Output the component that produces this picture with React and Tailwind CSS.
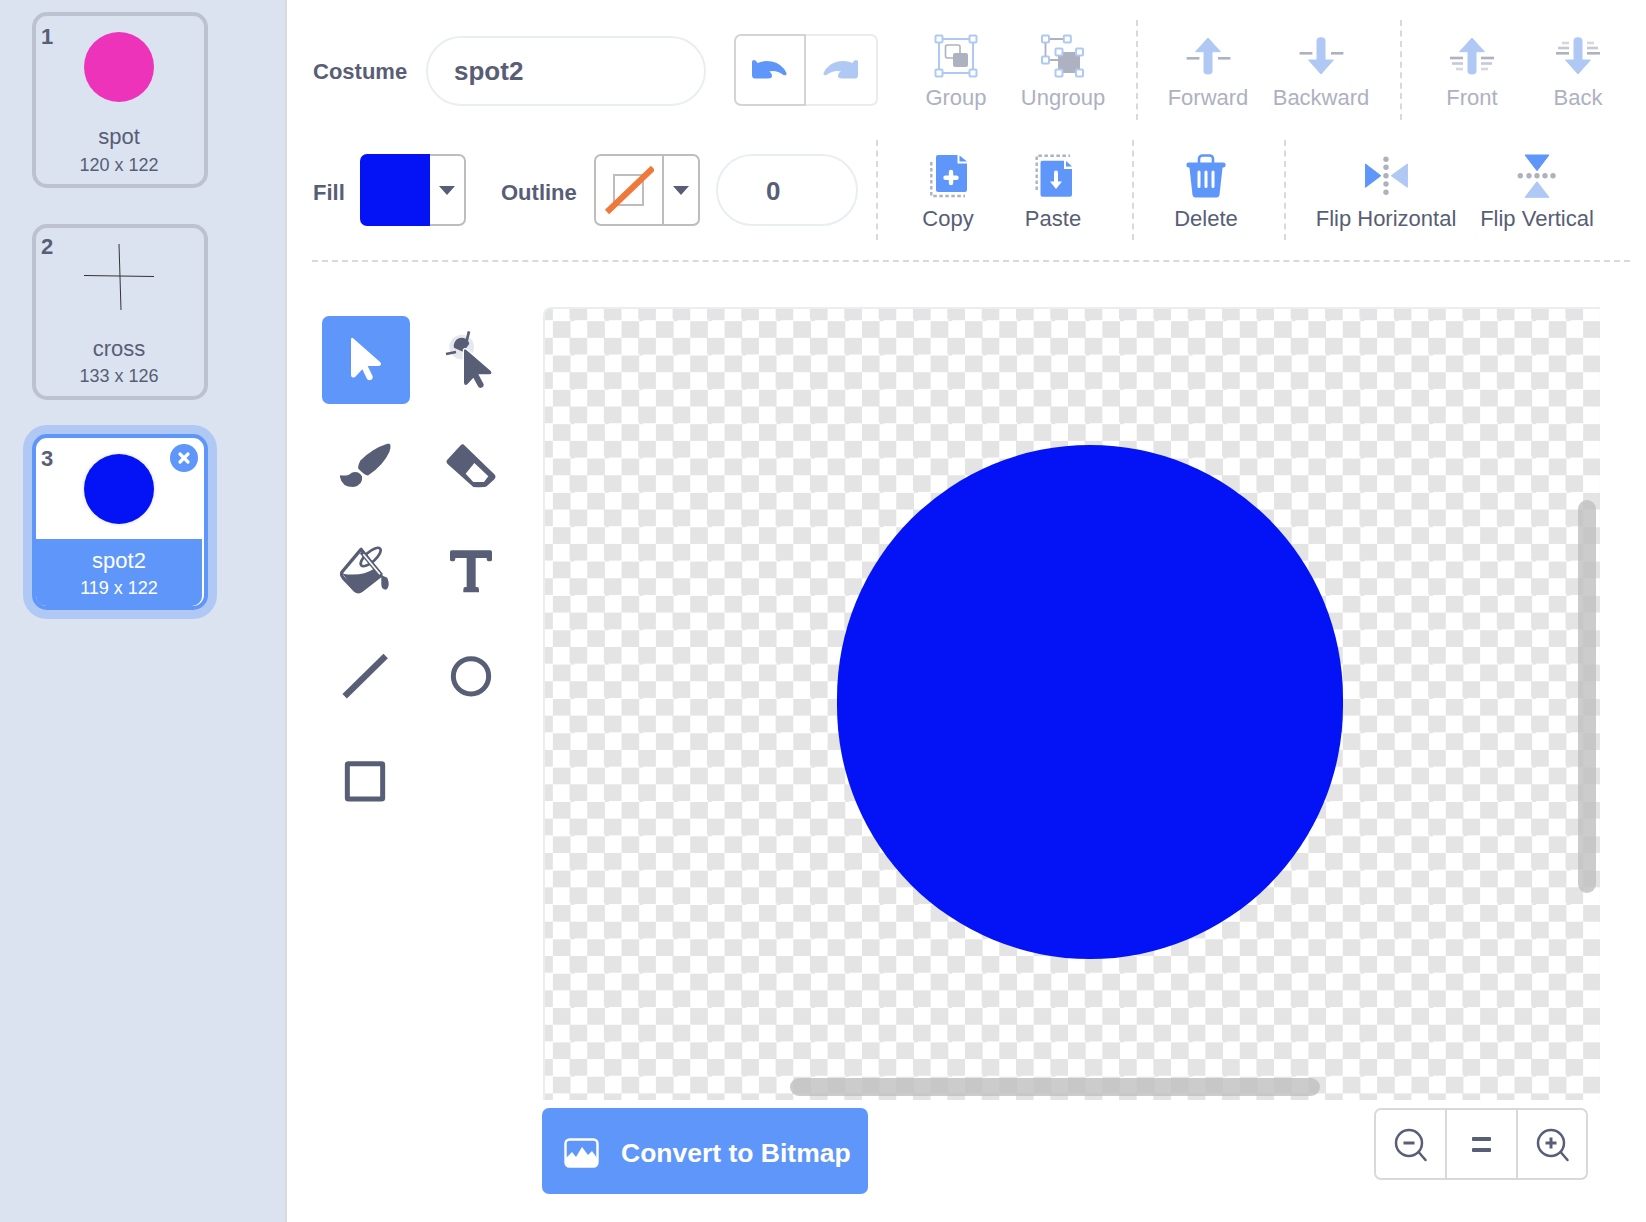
const gray = "#575e75";
const muted = "#aeb1bf";
const blue = "#5f96fa";
const pale = "#b0c8f4";

function CostumeCard({ num, name, size, selected, numClass, sizeClass, children }) {
    return (
        <div
            className={`relative w-[176px] h-[176px] rounded-[15px] border-4 flex flex-col items-center pr-[2px] ${
                selected
                    ? "border-[#5f96fa] bg-white shadow-[0_0_0_9px_#b0c8f4]"
                    : "border-[#bcc2cf]"
            }`}
        >
            <span className={`absolute left-[5px] text-[22px] leading-[26px] font-bold text-[#575e75] ${numClass}`}>
                {num}
            </span>
            <div className="mt-[16px] w-[70px] h-[70px]">{children}</div>
            {selected ? (
                <div className="self-start mt-[15px] w-[166px] h-[75px] bg-[#5f96fa] rounded-b-[10px] flex flex-col items-center text-white">
                    <span className="mt-[9px] text-[22px] leading-[26px]">{name}</span>
                    <span className="mt-[3px] text-[18px] leading-[22px]">{size}</span>
                </div>
            ) : (
                <>
                    <span className="mt-[22px] text-[22px] leading-[26px] text-[#575e75]">{name}</span>
                    <span className={`text-[18px] leading-[22px] text-[#575e75] ${sizeClass}`}>{size}</span>
                </>
            )}
            {selected && (
                <div className="absolute right-[6px] top-[6px] w-[28px] h-[28px] rounded-full bg-[#5f96fa] flex items-center justify-center">
                    <svg width="14" height="14" viewBox="0 0 14 14">
                        <path d="M3 3L11 11M11 3L3 11" stroke="#fff" strokeWidth="3.2" strokeLinecap="round" />
                    </svg>
                </div>
            )}
        </div>
    );
}

function ToolBtn({ label, disabled, className, children, top }) {
    return (
        <div className={`flex flex-col items-center shrink-0 ${top ? "pt-[10px]" : "pt-[11px]"} ${className}`}>
            <svg width="60" height="50" viewBox="0 0 60 50">
                {children}
            </svg>
            <span
                className={`mt-[5px] text-[22px] leading-[26px] whitespace-nowrap ${
                    disabled ? "text-[#aeb1bf]" : "text-[#575e75]"
                }`}
            >
                {label}
            </span>
        </div>
    );
}

function Sep({ className }) {
    return <div className={`h-[100px] shrink-0 border-l-2 border-dashed border-[#d9d9d9] ${className}`}></div>;
}

function ArrowUp({ dashes }) {
    return (
        <>
            <path d="M30 8L42.4 21.7H34V42Q34 44 30 44Q26 44 26 42V21.7H17.6Z" fill={pale} strokeLinejoin="round" stroke={pale} strokeWidth="1" />
            {dashes}
        </>
    );
}

function ArrowDown({ dashes }) {
    return (
        <>
            <path d="M30 44L42.4 30H34V10Q34 7.7 30 7.7Q26 7.7 26 10V30H17.6Z" fill={pale} strokeLinejoin="round" stroke={pale} strokeWidth="1" />
            {dashes}
        </>
    );
}

function Dash({ x1, x2, y, o }) {
    return <line x1={x1} x2={x2} y1={y} y2={y} stroke={muted} strokeWidth="2.6" opacity={o || 1} />;
}

function Handle({ x, y }) {
    return <rect x={x - 3.5} y={y - 3.5} width="7" height="7" rx="1" fill="#fff" stroke={pale} strokeWidth="2" />;
}

function Caret() {
    return (
        <svg width="16" height="9" viewBox="0 0 16 9">
            <path d="M0 0H16L8 9Z" fill={gray} />
        </svg>
    );
}

function Undo({ color, flip }) {
    return (
        <svg width="36" height="20" viewBox="0 0 36 20" className={flip ? "-scale-x-100" : ""}>
            <path
                d="M0 2Q0 0 2 0Q4 0 5.5 3Q12 0 20 1.5Q30 3.5 34.5 13Q35 16 31.5 15Q24 9.5 17 11.5Q20 13 20 16Q20 18.5 16 18.5H3Q0 18.5 0 15Z"
                fill={color}
            />
        </svg>
    );
}

function ToolIcon({ active, box, children }) {
    return (
        <div className={`w-[88px] h-[88px] rounded-[7px] ${active ? "bg-[#5f96fa]" : ""}`}>
            <svg width="88" height="88" viewBox={box}>
                {children}
            </svg>
        </div>
    );
}

function ZoomGlass({ plus }) {
    return (
        <svg width="34" height="34" viewBox="0 0 34 34">
            <circle cx="15" cy="15" r="13" fill="none" stroke={gray} strokeWidth="2.5" />
            <line x1="25" y1="24.5" x2="31.5" y2="32" stroke={gray} strokeWidth="2.5" strokeLinecap="round" />
            <line x1="9.5" x2="20.5" y1="15" y2="15" stroke={gray} strokeWidth="3" />
            {plus && <line x1="15" x2="15" y1="9.5" y2="20.5" stroke={gray} strokeWidth="3" />}
        </svg>
    );
}

export default function App() {
    return (
        <div className="flex w-full h-[1222px] overflow-hidden bg-white font-['Liberation_Sans',Arial,sans-serif] text-[#575e75]">
            {/* liste des costumes */}
            <div className="w-[287px] shrink-0 bg-[#dbe3f0] border-r-2 border-[#d9d9d9] pl-[32px] pt-[12px]">
                <CostumeCard num="1" name="spot" size="120 x 122" numClass="top-[8px]" sizeClass="mt-[4px]">
                    <div className="w-[70px] h-[70px] rounded-full bg-[#ee33bb]"></div>
                </CostumeCard>
                <div className="mt-[36px]">
                    <CostumeCard num="2" name="cross" size="133 x 126" numClass="top-[6px]" sizeClass="mt-[3px]">
                        <svg width="70" height="70" viewBox="0 0 70 70">
                            <path d="M0 31.5L70 32.5" stroke="#333" strokeWidth="1" />
                            <path d="M35 0L37 66" stroke="#333" strokeWidth="1" />
                        </svg>
                    </CostumeCard>
                </div>
                <div className="mt-[34px]">
                    <CostumeCard num="3" name="spot2" size="119 x 122" numClass="top-[8px]" selected>
                        <div className="w-[70px] h-[70px] rounded-full bg-[#0313f5] shadow-[0_0_4px_rgba(0,0,0,0.15)]"></div>
                    </CostumeCard>
                </div>
            </div>

            <div className="flex-1 min-w-0">
                {/* ligne 1 */}
                <div className="flex h-[100px] mt-[20px] pl-[26px]">
                    <div className="w-[113px] shrink-0 self-center mt-[2px] text-[22px] font-bold">Costume</div>
                    <div className="w-[280px] h-[70px] shrink-0 self-center mt-[2px] rounded-full border-2 border-[#e9eef2] pl-[26px] flex items-center text-[26px] font-bold">
                        spot2
                    </div>
                    <div className="ml-[28px] w-[144px] h-[72px] shrink-0 self-center flex">
                        <div className="w-[72px] rounded-l-[7px] border-2 border-[#d4d4d4] flex items-center justify-center">
                            <Undo color={blue} />
                        </div>
                        <div className="w-[72px] rounded-r-[7px] border-2 border-l-0 border-[#ebebeb] pr-[3px] flex items-center justify-center">
                            <Undo color={pale} flip />
                        </div>
                    </div>

                    <ToolBtn top disabled label="Group" className="ml-[30px] w-[96px]">
                        <rect x="13" y="9" width="34" height="34" fill="none" stroke={pale} strokeWidth="2" />
                        <rect x="19.5" y="15" width="14.5" height="13" rx="2" fill="#fff" stroke={muted} strokeWidth="1.6" />
                        <rect x="27" y="23" width="15" height="14" rx="2" fill={muted} />
                        <Handle x={13} y={9} />
                        <Handle x={47} y={9} />
                        <Handle x={13} y={43} />
                        <Handle x={47} y={43} />
                    </ToolBtn>
                    <ToolBtn top disabled label="Ungroup" className="ml-[11px] w-[96px]">
                        <path d="M12.5 9H34.3M12.5 9V30H26" fill="none" stroke={muted} strokeWidth="1.8" />
                        <rect x="25" y="22" width="22" height="21" fill={muted} />
                        <Handle x={12.5} y={9} />
                        <Handle x={34.3} y={9} />
                        <Handle x={12.5} y={30} />
                        <Handle x={26} y={22} />
                        <Handle x={46.5} y={22} />
                        <Handle x={26} y={43} />
                        <Handle x={46.5} y={43} />
                    </ToolBtn>
                    <Sep className="ml-[25px]" />
                    <ToolBtn top disabled label="Forward" className="ml-[20px] w-[100px]">
                        <ArrowUp
                            dashes={
                                <>
                                    <Dash x1={8.6} x2={21.4} y={28.3} />
                                    <Dash x1={40} x2={52.4} y={28.3} />
                                </>
                            }
                        />
                    </ToolBtn>
                    <ToolBtn top disabled label="Backward" className="ml-[13px] w-[100px]">
                        <ArrowDown
                            dashes={
                                <>
                                    <Dash x1={8.6} x2={21.4} y={23.3} />
                                    <Dash x1={40} x2={52.4} y={23.3} />
                                </>
                            }
                        />
                    </ToolBtn>
                    <Sep className="ml-[29px]" />
                    <ToolBtn top disabled label="Front" className="ml-[30px] w-[80px]">
                        <ArrowUp
                            dashes={
                                <>
                                    <Dash x1={8} x2={21} y={28} />
                                    <Dash x1={39} x2={52} y={28} />
                                    <Dash x1={10} x2={21} y={33.5} o={0.7} />
                                    <Dash x1={39} x2={50} y={33.5} o={0.7} />
                                    <Dash x1={14} x2={21} y={39} o={0.5} />
                                    <Dash x1={39} x2={46} y={39} o={0.5} />
                                </>
                            }
                        />
                    </ToolBtn>
                    <ToolBtn top disabled label="Back" className="ml-[26px] w-[80px]">
                        <ArrowDown
                            dashes={
                                <>
                                    <Dash x1={14} x2={21} y={13} o={0.5} />
                                    <Dash x1={39} x2={46} y={13} o={0.5} />
                                    <Dash x1={10} x2={21} y={18} o={0.7} />
                                    <Dash x1={39} x2={50} y={18} o={0.7} />
                                    <Dash x1={8} x2={21} y={23.3} />
                                    <Dash x1={39} x2={52} y={23.3} />
                                </>
                            }
                        />
                    </ToolBtn>
                </div>

                {/* ligne 2 */}
                <div className="flex h-[100px] mt-[20px] pl-[26px]">
                    <div className="w-[47px] shrink-0 self-center mt-[4px] text-[22px] font-bold">Fill</div>
                    <div className="w-[106px] h-[72px] shrink-0 self-center flex">
                        <div className="w-[70px] bg-[#0313f5] rounded-l-[7px]"></div>
                        <div className="flex-1 rounded-r-[7px] border-2 border-l-0 border-[#bdbdbd] flex items-center justify-center">
                            <Caret />
                        </div>
                    </div>
                    <div className="ml-[35px] w-[93px] shrink-0 self-center mt-[4px] text-[22px] font-bold">Outline</div>
                    <div className="w-[106px] h-[72px] shrink-0 self-center flex rounded-[7px] border-2 border-[#bdbdbd]">
                        <div className="w-[68px] border-r-2 border-[#bdbdbd] flex items-center justify-center">
                            <svg width="50" height="50" viewBox="0 0 50 50">
                                <rect x="10" y="10" width="29" height="30" fill="none" stroke="#bdbdbd" strokeWidth="2" />
                                <line x1="3" y1="47" x2="49" y2="3" stroke="#f0783a" strokeWidth="6" />
                            </svg>
                        </div>
                        <div className="flex-1 flex items-center justify-center">
                            <Caret />
                        </div>
                    </div>
                    <div className="ml-[16px] w-[142px] h-[72px] shrink-0 self-center rounded-full border-2 border-[#e9eef2] pl-[48px] pt-[2px] flex items-center text-[26px] font-bold">
                        0
                    </div>
                    <Sep className="ml-[18px]" />

                    <ToolBtn label="Copy" className="ml-[22px] w-[96px]">
                        <path d="M13.3 11V45H47" fill="none" stroke={muted} strokeWidth="2.4" strokeDasharray="3.5 2.5" />
                        <path d="M20 4H39.5V12.5H49V39Q49 41 47 41H20Q18 41 18 39V6Q18 4 20 4Z" fill={blue} />
                        <path d="M41.5 4.5L49 10.5H41.5Z" fill={blue} />
                        <path d="M33 21V32M27.5 26.7H38.5" stroke="#fff" strokeWidth="4.4" strokeLinecap="round" />
                    </ToolBtn>
                    <ToolBtn label="Paste" className="ml-[9px] w-[96px]">
                        <path d="M13.7 39V4.7H47" fill="none" stroke={muted} strokeWidth="2.4" strokeDasharray="3.5 2.5" />
                        <path d="M19.5 9.7H41V18H49V43.7Q49 45.7 47 45.7H19.5Q17.5 45.7 17.5 43.7V11.7Q17.5 9.7 19.5 9.7Z" fill={blue} />
                        <path d="M43 10L49 15.5H43Z" fill={blue} />
                        <path d="M33 21.5V33" stroke="#fff" strokeWidth="4" strokeLinecap="round" />
                        <path d="M27 30.5H39L33 38Z" fill="#fff" />
                    </ToolBtn>
                    <Sep className="ml-[31px]" />
                    <ToolBtn label="Delete" className="ml-[24px] w-[96px]">
                        <path d="M23 12V8Q23 4.5 27 4.5H33Q37 4.5 37 8V12" fill="none" stroke={blue} strokeWidth="2.6" />
                        <rect x="10.5" y="11.5" width="39" height="5" rx="2" fill={blue} />
                        <path d="M13.4 16H46.6L43.5 44Q43 46.5 40.5 46.5H19.5Q17 46.5 16.5 44Z" fill={blue} />
                        <path d="M23 21V35.5M30 21V35.5M37 21V35.5" stroke="#fff" strokeWidth="3" strokeLinecap="round" />
                    </ToolBtn>
                    <Sep className="ml-[30px]" />
                    <ToolBtn label="Flip Horizontal" className="ml-[25px] w-[150px]">
                        <path d="M9.5 13L24.8 24.7L9.5 36.3Z" fill={blue} stroke={blue} strokeLinejoin="round" />
                        <path d="M51.4 13L35.2 24.7L51.4 36.3Z" fill={pale} stroke={pale} strokeLinejoin="round" />
                        <circle cx="30" cy="8.3" r="2.7" fill={muted} />
                        <circle cx="30" cy="16.3" r="2.7" fill={muted} />
                        <circle cx="30" cy="24.7" r="2.7" fill={muted} />
                        <circle cx="30" cy="33" r="2.7" fill={muted} />
                        <circle cx="30" cy="41.3" r="2.7" fill={muted} />
                    </ToolBtn>
                    <ToolBtn label="Flip Vertical" className="ml-[1px] w-[150px]">
                        <path d="M18 4H42L30 19.7Z" fill={blue} stroke={blue} strokeLinejoin="round" />
                        <path d="M18 46.3H42L30 30.7Z" fill={pale} stroke={pale} strokeLinejoin="round" />
                        <circle cx="13.3" cy="24.7" r="2.7" fill={muted} />
                        <circle cx="22" cy="24.7" r="2.7" fill={muted} />
                        <circle cx="30" cy="24.7" r="2.7" fill={muted} />
                        <circle cx="38" cy="24.7" r="2.7" fill={muted} />
                        <circle cx="46" cy="24.7" r="2.7" fill={muted} />
                    </ToolBtn>
                </div>

                <div className="ml-[25px] mr-[16px] mt-[20px] border-t-2 border-dashed border-[#d9d9d9]"></div>

                <div className="flex">
                    {/* outils */}
                    <div className="ml-[35px] mt-[54px] w-[193px] shrink-0 grid grid-cols-[88px_88px] gap-[17px] content-start">
                        <ToolIcon active box="66 47 264 264">
                            <path d="M153 118Q153 108 162 116L241 186Q247 196 236 197L203 197L218 228Q220 238 209 240Q204 240 201 236L187 207L166 229Q155 236 153 225Z" fill="#fff" />
                        </ToolIcon>
                        <ToolIcon box="381 47 264 264">
                            <circle cx="485" cy="140" r="37" fill="#e6e8ed" />
                            <path d="M462 142A23 23 0 1 1 508 130L490 155Z" fill={gray} />
                            <line x1="507" y1="93" x2="500" y2="122" stroke={gray} strokeWidth="8" />
                            <line x1="438" y1="161" x2="468" y2="155" stroke={gray} strokeWidth="8" />
                            <path d="M492 152Q492 143 500 150L572 212Q578 221 568 222L535 222L551 252Q552 262 541 263Q537 263 534 258L520 232L502 252Q493 257 492 247Z" fill={gray} stroke="#fff" strokeWidth="8" paintOrder="stroke" />
                        </ToolIcon>
                        <ToolIcon box="66 362 264 264">
                            <path d="M268 430Q275 432 268 455Q250 495 205 525Q198 528 175 505Q172 498 182 480Q215 445 262 430Z" fill={gray} />
                            <path d="M120 525Q145 528 155 517Q175 510 186 528Q190 555 160 560Q125 560 120 530Z" fill={gray} />
                        </ToolIcon>
                        <ToolIcon box="381 362 264 264">
                            <path d="M490 432L583 522Q590 530 583 537L560 558Q553 562 520 560L442 490Q437 482 442 478L482 435Q487 430 490 432Z" fill={gray} />
                            <path d="M523 488L565 528L552 545L520 545L497 520Z" fill="#fff" />
                        </ToolIcon>
                        <ToolIcon box="66 677 264 264">
                            <path d="M183 747L126 815Q122 824 130 833L165 870Q175 878 185 870L243 825Z" fill="#fff" stroke={gray} strokeWidth="10" strokeLinejoin="round" />
                            <path d="M128 820Q185 830 222 805L243 825L180 874L165 870Z" fill={gray} />
                            <ellipse cx="212" cy="770" rx="38" ry="15" transform="rotate(-42 212 770)" fill="none" stroke={gray} strokeWidth="8" />
                            <line x1="185" y1="755" x2="243" y2="825" stroke={gray} strokeWidth="14" />
                            <line x1="190" y1="762" x2="240" y2="822" stroke="#fff" strokeWidth="5" />
                            <path d="M244 825L262 832Q272 858 258 868Q244 868 244 852Z" fill={gray} />
                        </ToolIcon>
                        <ToolIcon box="381 677 264 264">
                            <path d="M455 750H571Q576 750 576 755V778Q576 783 570 783H565Q560 783 560 773H527V860H532Q537 860 537 868V876H490V868Q490 860 495 860H500V773H466Q466 783 460 783H456Q450 783 450 778V755Q450 750 455 750Z" fill={gray} />
                        </ToolIcon>
                        <ToolIcon box="66 992 264 264">
                            <line x1="134" y1="1188" x2="257" y2="1067" stroke={gray} strokeWidth="19" />
                        </ToolIcon>
                        <ToolIcon box="381 992 264 264">
                            <circle cx="513" cy="1128" r="53" fill="none" stroke={gray} strokeWidth="15" />
                        </ToolIcon>
                        <ToolIcon box="66 1307 264 264">
                            <rect x="142" y="1390" width="106" height="106" rx="3" fill="none" stroke={gray} strokeWidth="15" />
                        </ToolIcon>
                    </div>

                    <div className="ml-[28px] mt-[45px] w-[1057px] shrink-0">
                        {/* zone de dessin */}
                        <div className="relative h-[793px] border-t-2 border-l-2 border-[#e9eef2] rounded-tl-[8px] overflow-hidden bg-[repeating-conic-gradient(#e4e4e4_0_25%,#fff_0_50%)] bg-[size:34.35px_34.35px] bg-[position:-26.5px_-5.5px]">
                            <div className="absolute left-[292px] top-[136px] w-[506px] h-[514px] rounded-full bg-[#0313f5]"></div>
                            <div className="absolute left-[1033px] top-[191px] w-[18px] h-[393px] rounded-full bg-[#bfbfbf]/80"></div>
                            <div className="absolute left-[245px] top-[769px] w-[530px] h-[18px] rounded-full bg-[#bfbfbf]/80"></div>
                        </div>

                        <div className="flex items-start justify-between mt-[8px] pr-[12px]">
                            <div className="w-[326px] h-[86px] -ml-[1px] rounded-[7px] bg-[#5f96fa] flex items-center pl-[22px] text-white">
                                <svg width="35" height="30" viewBox="0 0 35 30" className="mt-[3px]">
                                    <rect x="1.5" y="1.5" width="32" height="27" rx="4" fill="none" stroke="#fff" strokeWidth="2.4" />
                                    <path d="M2 28V20L8 14L12 19L18 9L24 17L28 13L33 20V28Z" fill="#fff" />
                                </svg>
                                <span className="ml-[22px] mt-[6px] text-[26.5px] font-bold whitespace-nowrap">Convert to Bitmap</span>
                            </div>
                            <div className="w-[214px] h-[72px] flex rounded-[7px] border-2 border-[#d9d9d9]">
                                <div className="w-[71px] border-r-2 border-[#d9d9d9] pt-[1px] pl-[1px] flex items-center justify-center">
                                    <ZoomGlass />
                                </div>
                                <div className="w-[71px] border-r-2 border-[#d9d9d9] flex flex-col gap-[7px] items-center justify-center">
                                    <div className="w-[19px] h-[4px] rounded-[1px] bg-[#575e75]"></div>
                                    <div className="w-[19px] h-[4px] rounded-[1px] bg-[#575e75]"></div>
                                </div>
                                <div className="flex-1 pt-[1px] pl-[1px] flex items-center justify-center">
                                    <ZoomGlass plus />
                                </div>
                            </div>
                        </div>
                    </div>
                </div>
            </div>
        </div>
    );
}
